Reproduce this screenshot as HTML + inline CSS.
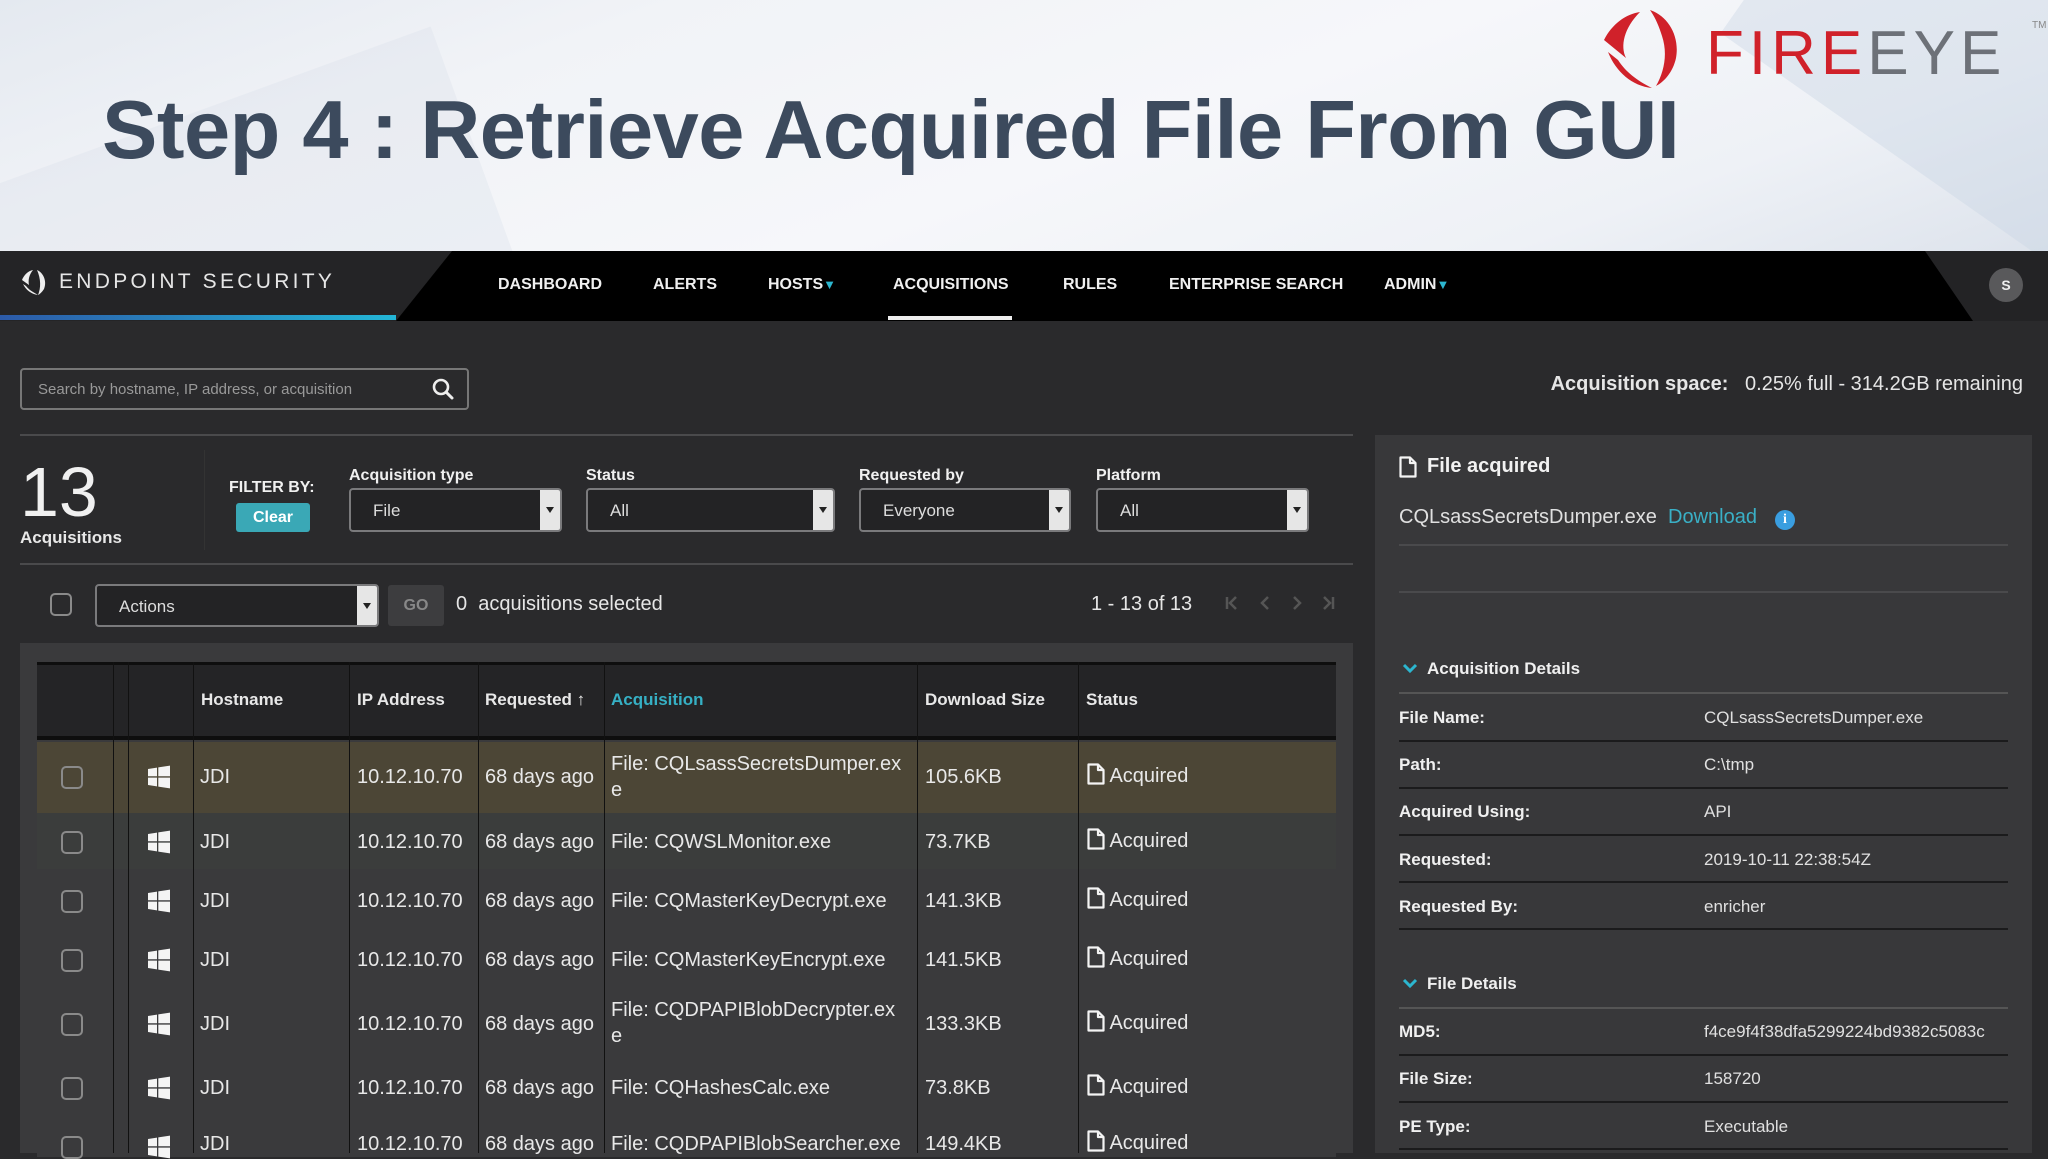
<!DOCTYPE html>
<html><head><meta charset="utf-8">
<style>
*{margin:0;padding:0;box-sizing:border-box}
body{width:2048px;height:1153px;overflow:hidden;position:relative;font-family:"Liberation Sans",sans-serif;background:#2a2a2c;color:#e8e8e8}
.a{position:absolute;white-space:nowrap}
.hdr{position:absolute;left:0;top:0;width:2048px;height:251px;background:linear-gradient(160deg,#e4e9f0 0%,#f1f3f7 25%,#f6f7fa 55%,#eef1f6 80%,#dde3ec 100%);overflow:hidden}
.title{left:102px;top:82px;font-size:83px;font-weight:bold;color:#3c4a5d;letter-spacing:-0.5px}
.nav{position:absolute;left:0;top:251px;width:2048px;height:70px;background:#000}
.navi{top:276px;font-size:16px;font-weight:bold;color:#f0f0f0}
.sel{position:absolute;border:2px solid #7a7a7c;border-radius:4px;background:#232325;color:#ddd;font-size:17px}
.sel .btn{position:absolute;right:0;top:0;bottom:0;width:20px;background:#e6e6e6;border-radius:0 2px 2px 0}
.sel .btn:after{content:"";position:absolute;left:6px;top:50%;margin-top:-3px;border-left:4px solid transparent;border-right:4px solid transparent;border-top:6px solid #222}
.lbl{font-size:16px;font-weight:bold;color:#f0f0f0}
.cb{position:absolute;width:22px;height:23px;border:2px solid #8a8a8a;border-radius:5px}
.row{position:absolute;left:37px;width:1299px;border-bottom:2px solid #3a3a3c}
.cell{position:absolute;font-size:20px;color:#e8e8e8;white-space:nowrap}
.vl{position:absolute;top:662px;height:491px;width:1px;background:#111}
.win{position:absolute;width:24px;height:24px}
.doc{display:inline-block;vertical-align:-3px}
.pl{position:absolute;left:1399px;font-size:17px;font-weight:bold;color:#f0f0f0}
.pv{position:absolute;left:1704px;font-size:17px;color:#e0e0e0}
.pline{position:absolute;left:1399px;width:609px;height:2px;background:#1b1b1c}
</style></head><body>
<div class="hdr">
  <div style="position:absolute;left:-100px;top:120px;width:600px;height:300px;background:rgba(215,222,233,0.3);transform:rotate(-20deg)"></div>
  <div style="position:absolute;left:1750px;top:-60px;width:500px;height:260px;background:rgba(200,212,228,0.4);transform:rotate(35deg)"></div>
</div>
<div class="a title">Step 4 : Retrieve Acquired File From GUI</div>
<!-- FireEye logo -->
<svg class="a" style="left:1598px;top:6px" width="88" height="84" viewBox="0 0 88 84">
  <path d="M52 4 C70 10 82 30 78 52 C75 66 66 76 58 80 C66 66 70 48 64 30 C61 20 57 11 52 4Z" fill="#d0212a"/>
  <path d="M42 6 C28 8 14 18 6 34 L28 52 C22 40 26 22 42 6Z" fill="#d0212a"/>
  <path d="M10 46 C18 66 34 80 54 82 C38 74 28 66 20 54Z" fill="#d0212a"/>
</svg>
<div class="a" style="left:1706px;top:18px;font-size:62px;letter-spacing:5px;font-weight:normal"><span style="color:#d0212a">FIRE</span><span style="color:#6d7178">EYE</span></div>
<div class="a" style="left:2032px;top:20px;font-size:10px;color:#888">TM</div>

<!-- nav -->
<div class="nav"></div>
<svg class="a" style="left:0;top:251px" width="2048" height="70">
  <polygon points="0,0 452,0 396,70 0,70" fill="#242426"/>
  <polygon points="1925,0 2048,0 2048,70 1973,70" fill="#232325"/>
  <defs><linearGradient id="bl" x1="0" x2="1"><stop offset="0" stop-color="#2c5aa8"/><stop offset="1" stop-color="#23b6d6"/></linearGradient></defs>
  <rect x="0" y="64" width="396" height="5" fill="url(#bl)"/>
</svg>
<svg class="a" style="left:20px;top:268px" width="28" height="28" viewBox="0 0 28 28">
  <path d="M17 2 C24 5 27 14 24 21 C22 24 20 26 18 27 C21 20 21 11 17 2Z" fill="#eee"/>
  <path d="M13 2 C8 3 4 7 2 12 L9 17 C8 12 9 7 13 2Z" fill="#eee"/>
  <path d="M3 16 C6 22 11 26 18 27 C13 24 9 22 6 18Z" fill="#eee"/>
</svg>
<div class="a" style="left:59px;top:270px;font-size:21px;letter-spacing:3.3px;color:#e6e6e6">ENDPOINT SECURITY</div>
<div class="a navi" style="left:498px">DASHBOARD</div>
<div class="a navi" style="left:653px">ALERTS</div>
<div class="a navi" style="left:768px">HOSTS<span style="color:#2cb6cf;font-size:13px">&#9660;</span></div>
<div class="a navi" style="left:893px">ACQUISITIONS</div>
<div class="a" style="left:888px;top:316px;width:124px;height:4px;background:#eee"></div>
<div class="a navi" style="left:1063px">RULES</div>
<div class="a navi" style="left:1169px">ENTERPRISE SEARCH</div>
<div class="a navi" style="left:1384px">ADMIN<span style="color:#2cb6cf;font-size:13px">&#9660;</span></div>
<div class="a" style="left:1989px;top:268px;width:34px;height:34px;border-radius:50%;background:#59595b;color:#eee;font-size:14px;font-weight:bold;text-align:center;line-height:34px">S</div>

<!-- search -->
<div class="a" style="left:20px;top:368px;width:449px;height:42px;border:2px solid #777;border-radius:4px"></div>
<div class="a" style="left:38px;top:381px;font-size:15px;color:#999">Search by hostname, IP address, or acquisition</div>
<svg class="a" style="left:431px;top:377px" width="24" height="24" viewBox="0 0 24 24"><circle cx="10" cy="10" r="7" stroke="#eee" stroke-width="2.6" fill="none"/><line x1="15" y1="15" x2="21" y2="21" stroke="#eee" stroke-width="3" stroke-linecap="round"/></svg>
<div class="a" style="right:25px;top:373px;font-size:20px;color:#e6e6e6"><b>Acquisition space:</b>&nbsp;&nbsp; 0.25% full - 314.2GB remaining</div>

<div class="a" style="left:20px;top:434px;width:1333px;height:2px;background:#4a4a4c"></div>
<div class="a" style="left:20px;top:563px;width:1333px;height:2px;background:#4a4a4c"></div>

<!-- filters -->
<div class="a" style="left:20px;top:452px;font-size:70px;font-weight:300;color:#f0f0f0">13</div>
<div class="a" style="left:20px;top:528px;font-size:17px;font-weight:bold">Acquisitions</div>
<div class="a" style="left:204px;top:450px;width:1px;height:100px;background:#333"></div>
<div class="a lbl" style="left:229px;top:479px">FILTER BY:</div>
<div class="a" style="left:236px;top:503px;width:74px;height:29px;background:#3aa8b6;border-radius:3px;color:#fff;font-weight:bold;font-size:16px;text-align:center;line-height:29px">Clear</div>
<div class="a lbl" style="left:349px;top:467px">Acquisition type</div>
<div class="sel" style="left:349px;top:488px;width:213px;height:44px"><span style="position:absolute;left:22px;top:11px">File</span><div class="btn"></div></div>
<div class="a lbl" style="left:586px;top:467px">Status</div>
<div class="sel" style="left:586px;top:488px;width:249px;height:44px"><span style="position:absolute;left:22px;top:11px">All</span><div class="btn"></div></div>
<div class="a lbl" style="left:859px;top:467px">Requested by</div>
<div class="sel" style="left:859px;top:488px;width:212px;height:44px"><span style="position:absolute;left:22px;top:11px">Everyone</span><div class="btn"></div></div>
<div class="a lbl" style="left:1096px;top:467px">Platform</div>
<div class="sel" style="left:1096px;top:488px;width:213px;height:44px"><span style="position:absolute;left:22px;top:11px">All</span><div class="btn"></div></div>

<!-- actions -->
<div class="cb" style="left:50px;top:593px"></div>
<div class="sel" style="left:95px;top:584px;width:284px;height:43px"><span style="position:absolute;left:22px;top:11px">Actions</span><div class="btn"></div></div>
<div class="a" style="left:388px;top:585px;width:56px;height:41px;background:#3d3d3f;border-radius:3px;color:#888;font-weight:bold;font-size:16px;text-align:center;line-height:41px">GO</div>
<div class="a" style="left:456px;top:593px;font-size:20px;color:#e6e6e6">0&nbsp; acquisitions selected</div>
<div class="a" style="left:1091px;top:593px;font-size:20px;color:#e6e6e6">1 - 13 of 13</div>
<svg class="a" style="left:1224px;top:594px" width="112" height="18" viewBox="0 0 112 18" fill="none" stroke="#555" stroke-width="2.5">
  <line x1="3" y1="3" x2="3" y2="15"/><path d="M12 3 L6 9 L12 15"/>
  <path d="M44 3 L38 9 L44 15"/>
  <path d="M70 3 L76 9 L70 15"/>
  <path d="M100 3 L106 9 L100 15"/><line x1="109" y1="3" x2="109" y2="15"/>
</svg>

<!-- table -->
<div class="a" style="left:20px;top:643px;width:1333px;height:510px;background:#3a3a3c"></div>
<div class="a" style="left:37px;top:662px;width:1299px;height:78px;background:#242426;border-top:3px solid #0e0e0e;border-bottom:4px solid #0e0e0e"></div>
<div class="cell" style="left:201px;top:690px;font-size:17px;font-weight:bold">Hostname</div>
<div class="cell" style="left:357px;top:690px;font-size:17px;font-weight:bold">IP Address</div>
<div class="cell" style="left:485px;top:690px;font-size:17px;font-weight:bold">Requested <span style="font-weight:normal">&#8593;</span></div>
<div class="cell" style="left:611px;top:690px;font-size:17px;font-weight:bold;color:#36b0c4">Acquisition</div>
<div class="cell" style="left:925px;top:690px;font-size:17px;font-weight:bold">Download Size</div>
<div class="cell" style="left:1086px;top:690px;font-size:17px;font-weight:bold">Status</div>

<div class="row" style="top:742px;height:71px;background:#4c4636;border-bottom:none"></div>
<div class="row" style="top:813px;height:58px;background:#3b3d3c"></div>
<div class="row" style="top:871px;height:59px;background:#3a3a3c"></div>
<div class="row" style="top:930px;height:59px;background:#3a3a3c"></div>
<div class="row" style="top:989px;height:69px;background:#3a3a3c"></div>
<div class="row" style="top:1058px;height:59px;background:#3a3a3c"></div>
<div class="row" style="top:1117px;height:40px;background:#3a3a3c;border:none"></div>

<div class="vl" style="left:113px"></div><div class="vl" style="left:128px"></div><div class="vl" style="left:193px"></div>
<div class="vl" style="left:349px"></div><div class="vl" style="left:478px"></div><div class="vl" style="left:604px"></div>
<div class="vl" style="left:917px"></div><div class="vl" style="left:1078px"></div>

<svg width="0" height="0" style="position:absolute"><defs>
<symbol id="w" viewBox="0 0 24 24"><path d="M1 4 L10 2.6 V11.3 H1Z M11.3 2.4 L23 0.6 V11.3 H11.3Z M1 12.6 H10 V21.4 L1 20Z M11.3 12.6 H23 V23.4 L11.3 21.6Z" fill="#f4f4f4"/></symbol>
<symbol id="d" viewBox="0 0 18 22"><path d="M1.5 1.5 H11 L16.5 7 V20.5 H1.5Z M11 1.5 V7 H16.5" fill="none" stroke="#f4f4f4" stroke-width="2.2" stroke-linejoin="round"/></symbol>
</defs></svg>

<!-- rows -->
<div class="cb" style="left:61px;top:766px"></div><svg class="win" style="left:147px;top:765px"><use href="#w"/></svg>
<div class="cell" style="left:200px;top:766px">JDI</div><div class="cell" style="left:357px;top:766px">10.12.10.70</div><div class="cell" style="left:485px;top:766px">68 days ago</div>
<div class="cell" style="left:611px;top:751px;line-height:26px">File: CQLsassSecretsDumper.ex<br>e</div><div class="cell" style="left:925px;top:766px">105.6KB</div>
<div class="cell" style="left:1087px;top:763px"><svg class="doc" width="18" height="22"><use href="#d"/></svg> Acquired</div>

<div class="cb" style="left:61px;top:831px"></div><svg class="win" style="left:147px;top:830px"><use href="#w"/></svg>
<div class="cell" style="left:200px;top:831px">JDI</div><div class="cell" style="left:357px;top:831px">10.12.10.70</div><div class="cell" style="left:485px;top:831px">68 days ago</div>
<div class="cell" style="left:611px;top:831px">File: CQWSLMonitor.exe</div><div class="cell" style="left:925px;top:831px">73.7KB</div>
<div class="cell" style="left:1087px;top:828px"><svg class="doc" width="18" height="22"><use href="#d"/></svg> Acquired</div>

<div class="cb" style="left:61px;top:890px"></div><svg class="win" style="left:147px;top:889px"><use href="#w"/></svg>
<div class="cell" style="left:200px;top:890px">JDI</div><div class="cell" style="left:357px;top:890px">10.12.10.70</div><div class="cell" style="left:485px;top:890px">68 days ago</div>
<div class="cell" style="left:611px;top:890px">File: CQMasterKeyDecrypt.exe</div><div class="cell" style="left:925px;top:890px">141.3KB</div>
<div class="cell" style="left:1087px;top:887px"><svg class="doc" width="18" height="22"><use href="#d"/></svg> Acquired</div>

<div class="cb" style="left:61px;top:949px"></div><svg class="win" style="left:147px;top:948px"><use href="#w"/></svg>
<div class="cell" style="left:200px;top:949px">JDI</div><div class="cell" style="left:357px;top:949px">10.12.10.70</div><div class="cell" style="left:485px;top:949px">68 days ago</div>
<div class="cell" style="left:611px;top:949px">File: CQMasterKeyEncrypt.exe</div><div class="cell" style="left:925px;top:949px">141.5KB</div>
<div class="cell" style="left:1087px;top:946px"><svg class="doc" width="18" height="22"><use href="#d"/></svg> Acquired</div>

<div class="cb" style="left:61px;top:1013px"></div><svg class="win" style="left:147px;top:1012px"><use href="#w"/></svg>
<div class="cell" style="left:200px;top:1013px">JDI</div><div class="cell" style="left:357px;top:1013px">10.12.10.70</div><div class="cell" style="left:485px;top:1013px">68 days ago</div>
<div class="cell" style="left:611px;top:997px;line-height:26px">File: CQDPAPIBlobDecrypter.ex<br>e</div><div class="cell" style="left:925px;top:1013px">133.3KB</div>
<div class="cell" style="left:1087px;top:1010px"><svg class="doc" width="18" height="22"><use href="#d"/></svg> Acquired</div>

<div class="cb" style="left:61px;top:1077px"></div><svg class="win" style="left:147px;top:1076px"><use href="#w"/></svg>
<div class="cell" style="left:200px;top:1077px">JDI</div><div class="cell" style="left:357px;top:1077px">10.12.10.70</div><div class="cell" style="left:485px;top:1077px">68 days ago</div>
<div class="cell" style="left:611px;top:1077px">File: CQHashesCalc.exe</div><div class="cell" style="left:925px;top:1077px">73.8KB</div>
<div class="cell" style="left:1087px;top:1074px"><svg class="doc" width="18" height="22"><use href="#d"/></svg> Acquired</div>

<div class="cb" style="left:61px;top:1136px"></div><svg class="win" style="left:147px;top:1135px"><use href="#w"/></svg>
<div class="cell" style="left:200px;top:1133px">JDI</div><div class="cell" style="left:357px;top:1133px">10.12.10.70</div><div class="cell" style="left:485px;top:1133px">68 days ago</div>
<div class="cell" style="left:611px;top:1133px">File: CQDPAPIBlobSearcher.exe</div><div class="cell" style="left:925px;top:1133px">149.4KB</div>
<div class="cell" style="left:1087px;top:1130px"><svg class="doc" width="18" height="22"><use href="#d"/></svg> Acquired</div>

<!-- right panel -->
<div class="a" style="left:1375px;top:435px;width:657px;height:718px;background:#38383a"></div>
<svg class="a" style="left:1399px;top:456px" width="18" height="22"><use href="#d"/></svg>
<div class="a" style="left:1427px;top:455px;font-size:20px;font-weight:bold;color:#f2f2f2">File acquired</div>
<div class="a" style="left:1399px;top:506px;font-size:20px;color:#e0e0e0">CQLsassSecretsDumper.exe&nbsp; <span style="color:#3ab0c6">Download</span></div>
<div class="a" style="left:1775px;top:510px;width:20px;height:20px;border-radius:50%;background:#3a9ee0;color:#fff;font-size:14px;font-weight:bold;text-align:center;line-height:20px;font-family:'Liberation Serif',serif">i</div>
<div class="a" style="left:1399px;top:544px;width:609px;height:2px;background:#4a4a4c"></div>
<div class="a" style="left:1399px;top:591px;width:609px;height:2px;background:#4a4a4c"></div>

<svg class="a" style="left:1402px;top:662px" width="16" height="12"><path d="M2 3 L8 9 L14 3" stroke="#2cb6cf" stroke-width="3" fill="none"/></svg>
<div class="a" style="left:1427px;top:659px;font-size:17px;font-weight:bold;color:#f0f0f0">Acquisition Details</div>
<div class="a" style="left:1399px;top:692px;width:609px;height:2px;background:#555"></div>
<div class="pl" style="top:708px">File Name:</div><div class="pv" style="top:708px">CQLsassSecretsDumper.exe</div><div class="pline" style="top:740px"></div>
<div class="pl" style="top:755px">Path:</div><div class="pv" style="top:755px">C:\tmp</div><div class="pline" style="top:787px"></div>
<div class="pl" style="top:802px">Acquired Using:</div><div class="pv" style="top:802px">API</div><div class="pline" style="top:834px"></div>
<div class="pl" style="top:850px">Requested:</div><div class="pv" style="top:850px">2019-10-11 22:38:54Z</div><div class="pline" style="top:881px"></div>
<div class="pl" style="top:897px">Requested By:</div><div class="pv" style="top:897px">enricher</div><div class="pline" style="top:928px"></div>

<svg class="a" style="left:1402px;top:977px" width="16" height="12"><path d="M2 3 L8 9 L14 3" stroke="#2cb6cf" stroke-width="3" fill="none"/></svg>
<div class="a" style="left:1427px;top:974px;font-size:17px;font-weight:bold;color:#f0f0f0">File Details</div>
<div class="a" style="left:1399px;top:1007px;width:609px;height:2px;background:#555"></div>
<div class="pl" style="top:1022px">MD5:</div><div class="pv" style="top:1022px">f4ce9f4f38dfa5299224bd9382c5083c</div><div class="pline" style="top:1054px"></div>
<div class="pl" style="top:1069px">File Size:</div><div class="pv" style="top:1069px">158720</div><div class="pline" style="top:1101px"></div>
<div class="pl" style="top:1117px">PE Type:</div><div class="pv" style="top:1117px">Executable</div><div class="pline" style="top:1148px"></div>
</body></html>
